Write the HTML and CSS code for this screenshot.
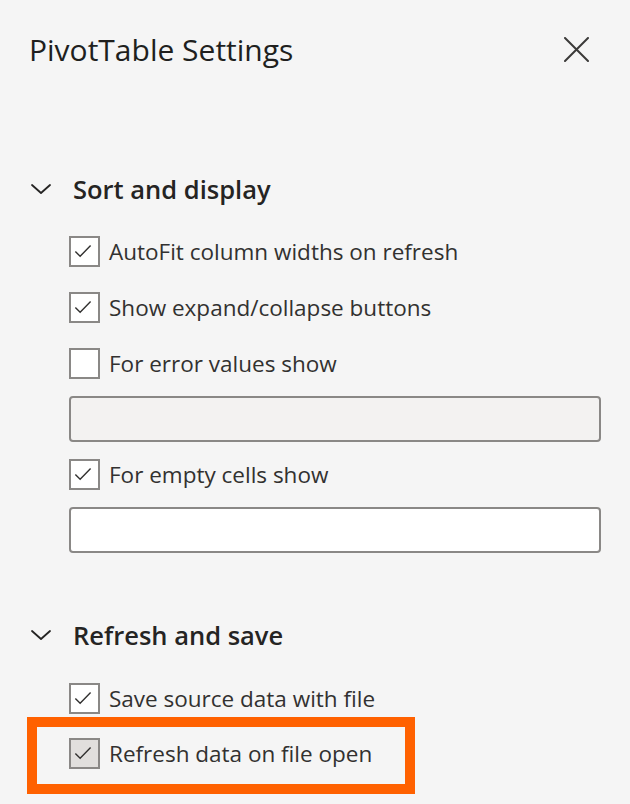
FILE: index.html
```html
<!DOCTYPE html>
<html lang="en">
<head>
<meta charset="utf-8">
<title>PivotTable Settings</title>
<link rel="stylesheet" href="styles.css">
</head>
<body>
<div class="pane">
  <header class="header">
    <h1 class="title">PivotTable Settings</h1>
    <button class="close" aria-label="Close">
      <svg viewBox="0 0 25 25" width="25" height="25"><path d="M1 1 L24 24 M24 1 L1 24" stroke="#3b3a39" stroke-width="2" stroke-linecap="round" fill="none"/></svg>
    </button>
  </header>

  <section class="section first">
    <div class="section-head">
      <svg class="chevron" viewBox="0 0 20 10" width="20" height="10"><path d="M1 1 L10 9 L19 1" stroke="#252423" stroke-width="1.8" fill="none" stroke-linecap="round" stroke-linejoin="round"/></svg>
      <h2 class="section-title">Sort and display</h2>
    </div>
    <div class="options">
      <label class="option"><span class="box checked"><svg viewBox="0 0 31 31" width="27" height="27"><path d="M5 15.5 L10.5 21 L22.5 8.5" stroke="#323130" stroke-width="1.6" fill="none"/></svg></span><span class="label">AutoFit column widths on refresh</span></label>
      <label class="option"><span class="box checked"><svg viewBox="0 0 31 31" width="27" height="27"><path d="M5 15.5 L10.5 21 L22.5 8.5" stroke="#323130" stroke-width="1.6" fill="none"/></svg></span><span class="label">Show expand/collapse buttons</span></label>
      <label class="option before-field"><span class="box"></span><span class="label">For error values show</span></label>
      <div class="field disabled"></div>
      <label class="option after-field before-field"><span class="box checked"><svg viewBox="0 0 31 31" width="27" height="27"><path d="M5 15.5 L10.5 21 L22.5 8.5" stroke="#323130" stroke-width="1.6" fill="none"/></svg></span><span class="label">For empty cells show</span></label>
      <div class="field"></div>
    </div>
  </section>

  <section class="section second">
    <div class="section-head">
      <svg class="chevron" viewBox="0 0 20 10" width="20" height="10"><path d="M1 1 L10 9 L19 1" stroke="#252423" stroke-width="1.8" fill="none" stroke-linecap="round" stroke-linejoin="round"/></svg>
      <h2 class="section-title">Refresh and save</h2>
    </div>
    <div class="options">
      <label class="option tight"><span class="box checked"><svg viewBox="0 0 31 31" width="27" height="27"><path d="M5 15.5 L10.5 21 L22.5 8.5" stroke="#323130" stroke-width="1.6" fill="none"/></svg></span><span class="label">Save source data with file</span></label>
      <label class="option highlighted"><span class="box checked grey"><svg viewBox="0 0 31 31" width="27" height="27"><path d="M5 15.5 L10.5 21 L22.5 8.5" stroke="#323130" stroke-width="1.6" fill="none"/></svg></span><span class="label">Refresh data on file open</span></label>
    </div>
  </section>
</div>
</body>
</html>
```

FILE: styles.css
```css
html, body {
  margin: 0;
  padding: 0;
  background: #f5f5f5;
}

body {
  font-family: "Open Sans", "Noto Sans", "Liberation Sans", sans-serif;
  color: #323130;
}

.pane {
  width: 630px;
  height: 804px;
  overflow: hidden;
}

.header {
  display: flex;
  justify-content: space-between;
  align-items: flex-start;
  padding: 32px 41px 0 29px;
}

.title {
  margin: 0;
  font-size: 30px;
  line-height: 36px;
  font-weight: 400;
  color: #201f1e;
}

.close {
  border: 0;
  background: transparent;
  padding: 0;
  margin-top: 5px;
  width: 25px;
  height: 25px;
  display: block;
}

.close svg {
  display: block;
}

.section.first {
  margin-top: 105px;
}

.section.second {
  margin-top: 66px;
}

.section-head {
  display: flex;
  align-items: center;
  padding-left: 31px;
  height: 32px;
}

.chevron {
  display: block;
  margin-top: -1px;
}

.section-title {
  margin: 0 0 0 22px;
  font-size: 25.5px;
  line-height: 32px;
  font-weight: 600;
  color: #252423;
}

.options {
  display: flex;
  flex-direction: column;
  padding: 0 29px 0 69px;
}

.first .options {
  margin-top: 31px;
}

.second .options {
  margin-top: 32px;
}

.option {
  display: flex;
  align-items: center;
  gap: 9px;
  height: 31px;
  margin-bottom: 25px;
  position: relative;
}

.option.tight {
  margin-bottom: 24px;
}

.option.before-field {
  margin-bottom: 17px;
}

.option.after-field {
  margin-top: 17px;
}

.box {
  width: 31px;
  height: 31px;
  box-sizing: border-box;
  border: 2px solid #8a8886;
  background: #ffffff;
  display: flex;
  align-items: center;
  justify-content: center;
  flex: none;
}

.box svg {
  display: block;
}

.box.grey {
  background: #e1dfdd;
}

.label {
  font-size: 22.5px;
  line-height: 30px;
  color: #323130;
}

.field {
  height: 46px;
  box-sizing: border-box;
  border: 2px solid #8a8886;
  border-radius: 4px;
  background: #ffffff;
}

.field.disabled {
  background: #f3f2f1;
}

.highlighted::after {
  content: "";
  position: absolute;
  left: -42px;
  top: -21px;
  width: 388px;
  height: 77px;
  box-sizing: border-box;
  border: 10px solid #ff6100;
  pointer-events: none;
}
```
